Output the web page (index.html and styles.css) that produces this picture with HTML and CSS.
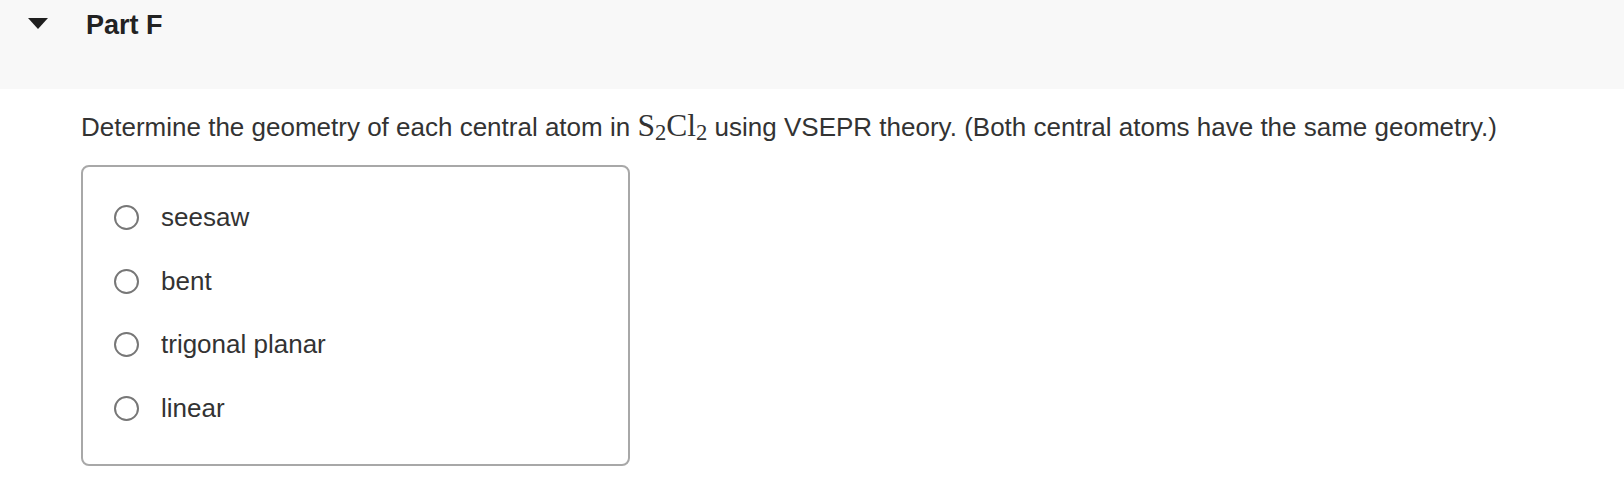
FILE: index.html
```html
<!DOCTYPE html>
<html>
<head>
<meta charset="utf-8">
<link rel="stylesheet" href="styles.css">
</head>
<body>
<div class="part-header">
  <svg class="caret" width="20" height="11" viewBox="0 0 20 11"><polygon points="0,0 20,0 10,11" fill="#1f1f1f"/></svg>
  <h2 class="part-title">Part F</h2>
</div>
<div class="part-body">
  <p class="question">Determine the geometry of each central atom in <span class="math">S<sub>2</sub>Cl<sub>2</sub></span> using VSEPR theory. (Both central atoms have the same geometry.)</p>
  <div class="choices">
    <label class="choice"><span class="radio"></span><span class="choice-label">seesaw</span></label>
    <label class="choice"><span class="radio"></span><span class="choice-label">bent</span></label>
    <label class="choice"><span class="radio"></span><span class="choice-label">trigonal planar</span></label>
    <label class="choice"><span class="radio"></span><span class="choice-label">linear</span></label>
  </div>
</div>
</body>
</html>
```
FILE: styles.css
```css
html, body {
  margin: 0;
  padding: 0;
  background: #ffffff;
  font-family: "Liberation Sans", Arial, sans-serif;
  color: #333333;
}

.part-header {
  display: flex;
  align-items: flex-start;
  height: 89px;
  box-sizing: border-box;
  padding: 9px 0 0 28px;
  background: #f8f8f8;
}

.caret {
  display: block;
  margin-top: 9px;
  margin-right: 38px;
}

.part-title {
  margin: 0;
  font-size: 27px;
  line-height: 32px;
  font-weight: bold;
  color: #222222;
}

.part-body {
  padding-left: 81px;
}

.question {
  margin: 22px 0 0 0;
  font-size: 26px;
  line-height: 30px;
  color: #333333;
  white-space: nowrap;
}

.math {
  font-family: "Liberation Serif", serif;
  font-size: 31.5px;
  color: #333333;
}

.math sub {
  font-size: 0.72em;
  vertical-align: -0.18em;
  line-height: 0;
}

.choices {
  margin-top: 23px;
  width: 549px;
  height: 301px;
  box-sizing: border-box;
  border: 2px solid #a8a8a8;
  border-radius: 8px;
  padding: 19px 0 0 31px;
  display: flex;
  flex-direction: column;
}

.choice {
  display: flex;
  align-items: center;
  height: 63.5px;
  font-size: 26px;
  color: #333333;
}

.radio {
  width: 25px;
  height: 25px;
  box-sizing: border-box;
  border: 2px solid #777777;
  border-radius: 50%;
  flex: none;
  margin-right: 22px;
}
```
